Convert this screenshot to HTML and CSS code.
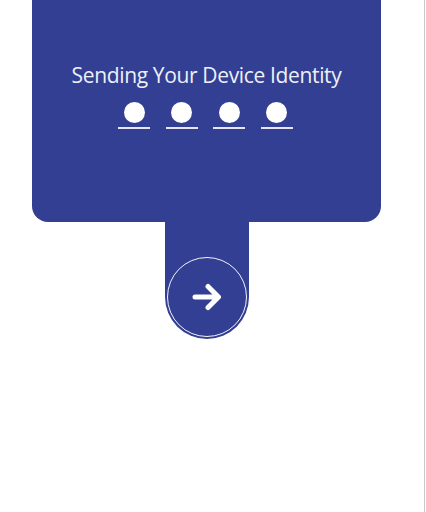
FILE: index.html
```html
<!DOCTYPE html>
<html>
<head>
<meta charset="utf-8">
<link rel="stylesheet" href="styles.css">
</head>
<body>
<div class="screen">
  <div class="panel">
    <div class="card">
      <h1 class="title">Sending Your Device Identity</h1>
      <div class="pins">
        <div class="pin"><span class="dot"></span></div>
        <div class="pin"><span class="dot"></span></div>
        <div class="pin"><span class="dot"></span></div>
        <div class="pin"><span class="dot"></span></div>
      </div>
    </div>
    <div class="stem">
      <div class="btn">
        <svg class="arrow" width="30" height="28" viewBox="0 0 30 28">
          <path d="M3 14 H26 M16 3.5 L26.5 14 L16 24.5" fill="none" stroke="#fff" stroke-width="5" stroke-linecap="round" stroke-linejoin="round"/>
        </svg>
      </div>
    </div>
  </div>
</div>
</body>
</html>
```
FILE: styles.css
```css
html, body {
  margin: 0;
  padding: 0;
  background: #ffffff;
}
.screen {
  width: 424px;
  height: 512px;
  border-right: 1px solid #c9c9c9;
  box-sizing: content-box;
  overflow: hidden;
}
.panel {
  width: 349px;
  margin-left: 32px;
  display: flex;
  flex-direction: column;
  align-items: center;
}
.card {
  width: 100%;
  height: 222px;
  background: #323f92;
  border-radius: 0 0 16px 16px;
  display: flex;
  flex-direction: column;
  align-items: center;
  padding-top: 61px;
  box-sizing: border-box;
}
.title {
  margin: 0;
  font-family: "Open Sans", sans-serif;
  font-weight: 400;
  font-size: 21px;
  line-height: 28px;
  letter-spacing: -0.35px;
  color: #eef0f8;
}
.pins {
  display: flex;
  gap: 15.5px;
  margin-top: 12px;
  margin-right: 2px;
}
.pin {
  width: 32px;
  height: 28px;
  border-bottom: 2px solid #e4e7f3;
  display: flex;
  justify-content: center;
  padding-top: 1px;
  box-sizing: border-box;
}
.dot {
  width: 21px;
  height: 21px;
  border-radius: 50%;
  background: #ffffff;
}
.stem {
  width: 84px;
  height: 117px;
  background: #323f92;
  border-radius: 0 0 42px 42px;
  display: flex;
  flex-direction: column;
  justify-content: flex-end;
  align-items: center;
}
.btn {
  width: 78px;
  height: 78px;
  margin-bottom: 2px;
  border: 1.5px solid #f2f3f8;
  border-radius: 50%;
  display: flex;
  justify-content: center;
  align-items: center;
}
.arrow {
  display: block;
}
```
